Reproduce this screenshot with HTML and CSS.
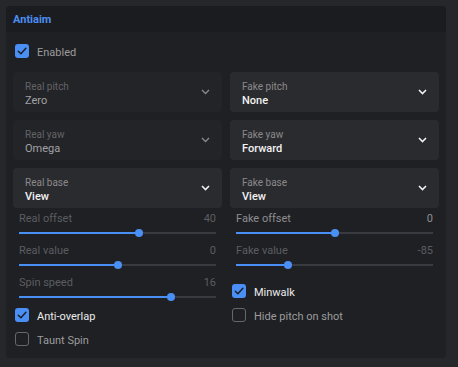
FILE: index.html
```html
<!DOCTYPE html>
<html lang="en">
<head>
  <meta charset="UTF-8" />
  <title>Antiaim</title>
  <link rel="stylesheet" href="styles.css">
</head>
<body>
  <div class="panel">
    <div class="panel-head">Antiaim</div>
    <div class="panel-body">
      <label class="check on dimtext">
        <span class="box"><svg width="14" height="14" viewBox="0 0 14 14"><path d="M3.3 7.2 L5.9 9.8 L10.9 4.2" /></svg></span>
        <span class="check-text">Enabled</span>
      </label>

      <div class="cols">
        <div class="col">
          <div class="select disabled">
            <div class="select-text">
              <span class="select-label">Real pitch</span>
              <span class="select-value">Zero</span>
            </div>
            <svg class="chev" width="9" height="6" viewBox="0 0 9 6"><path d="M1 1 L4.5 4.5 L8 1" /></svg>
          </div>
          <div class="select disabled">
            <div class="select-text">
              <span class="select-label">Real yaw</span>
              <span class="select-value">Omega</span>
            </div>
            <svg class="chev" width="9" height="6" viewBox="0 0 9 6"><path d="M1 1 L4.5 4.5 L8 1" /></svg>
          </div>
          <div class="select">
            <div class="select-text">
              <span class="select-label">Real base</span>
              <span class="select-value">View</span>
            </div>
            <svg class="chev" width="9" height="6" viewBox="0 0 9 6"><path d="M1 1 L4.5 4.5 L8 1" /></svg>
          </div>

          <div class="slider dim">
            <div class="slider-head"><span>Real offset</span><span>40</span></div>
            <div class="track"><div class="fill" style="width: 61%"><span class="knob"></span></div></div>
          </div>
          <div class="slider dim">
            <div class="slider-head"><span>Real value</span><span>0</span></div>
            <div class="track"><div class="fill" style="width: 50%"><span class="knob"></span></div></div>
          </div>
          <div class="slider dim">
            <div class="slider-head"><span>Spin speed</span><span>16</span></div>
            <div class="track"><div class="fill" style="width: 77%"><span class="knob"></span></div></div>
          </div>

          <label class="check on">
            <span class="box"><svg width="14" height="14" viewBox="0 0 14 14"><path d="M3.3 7.2 L5.9 9.8 L10.9 4.2" /></svg></span>
            <span class="check-text">Anti-overlap</span>
          </label>
          <label class="check dimtext">
            <span class="box"></span>
            <span class="check-text">Taunt Spin</span>
          </label>
        </div>

        <div class="col">
          <div class="select">
            <div class="select-text">
              <span class="select-label">Fake pitch</span>
              <span class="select-value">None</span>
            </div>
            <svg class="chev" width="9" height="6" viewBox="0 0 9 6"><path d="M1 1 L4.5 4.5 L8 1" /></svg>
          </div>
          <div class="select">
            <div class="select-text">
              <span class="select-label">Fake yaw</span>
              <span class="select-value">Forward</span>
            </div>
            <svg class="chev" width="9" height="6" viewBox="0 0 9 6"><path d="M1 1 L4.5 4.5 L8 1" /></svg>
          </div>
          <div class="select">
            <div class="select-text">
              <span class="select-label">Fake base</span>
              <span class="select-value">View</span>
            </div>
            <svg class="chev" width="9" height="6" viewBox="0 0 9 6"><path d="M1 1 L4.5 4.5 L8 1" /></svg>
          </div>

          <div class="slider">
            <div class="slider-head"><span>Fake offset</span><span>0</span></div>
            <div class="track"><div class="fill" style="width: 50%"><span class="knob"></span></div></div>
          </div>
          <div class="slider dim">
            <div class="slider-head"><span>Fake value</span><span>-85</span></div>
            <div class="track"><div class="fill" style="width: 26.5%"><span class="knob"></span></div></div>
          </div>

          <label class="check on first">
            <span class="box"><svg width="14" height="14" viewBox="0 0 14 14"><path d="M3.3 7.2 L5.9 9.8 L10.9 4.2" /></svg></span>
            <span class="check-text">Minwalk</span>
          </label>
          <label class="check dimtext">
            <span class="box"></span>
            <span class="check-text">Hide pitch on shot</span>
          </label>
        </div>
      </div>
    </div>
  </div>
</body>
</html>
```

FILE: styles.css
```css
body {
  margin: 0;
  padding: 6px;
  background-color: #26272b;
  font-family: Roboto, "Liberation Sans", sans-serif;
  font-size: 11px;
  color: #e8e8e8;
}

.panel {
  width: 440px;
  height: 352px;
  box-sizing: border-box;
  background-color: #1f2024;
  border-radius: 4px;
  overflow: hidden;
}

.panel-head {
  height: 26px;
  box-sizing: border-box;
  padding: 2px 0 0 7px;
  line-height: 24px;
  background-color: #1b1c1f;
  color: #4b8ef2;
  font-weight: bold;
  font-size: 11px;
}

.panel-body {
  padding: 8px 7px 6px;
}

.check {
  display: flex;
  align-items: center;
  height: 22px;
  padding: 0 0 2px 2px;
  color: #ececec;
}

.check-text {
  padding-top: 2px;
}

.check.dimtext {
  color: #9c9c9c;
}

.panel-body > .check {
  margin-bottom: 8px;
}

.check.first {
  margin-top: 8px;
}

.box {
  width: 14px;
  height: 14px;
  box-sizing: border-box;
  border: 1.5px solid #66676b;
  border-radius: 3px;
  margin-right: 8px;
  flex-shrink: 0;
}

.check.on .box {
  border: none;
  background-color: #4a8ff5;
}

.box svg {
  display: block;
}

.box path {
  fill: none;
  stroke: #1d1e22;
  stroke-width: 1.5;
  stroke-linecap: round;
  stroke-linejoin: round;
}

.cols {
  display: grid;
  grid-template-columns: 209px 209px;
  column-gap: 8px;
}

.col {
  display: flex;
  flex-direction: column;
}

.select {
  height: 40px;
  box-sizing: border-box;
  margin-bottom: 8px;
  padding: 9px 12px 0;
  display: flex;
  justify-content: space-between;
  background-color: #2a2b2f;
  border-radius: 4px;
}

.select:nth-child(3) {
  margin-bottom: 0;
}

.select-text {
  display: flex;
  flex-direction: column;
}

.select-label {
  font-size: 10px;
  line-height: 12px;
  color: #8a8a8c;
}

.select-value {
  font-size: 11px;
  line-height: 16px;
  font-weight: 500;
  color: #f2f2f2;
}

.chev {
  margin-top: 8px;
}

.chev path {
  fill: none;
  stroke: #f0f0f0;
  stroke-width: 1.6;
}

.select.disabled {
  background-color: #232428;
}

.select.disabled .select-label {
  color: #626366;
}

.select.disabled .select-value {
  font-weight: normal;
  color: #a2a2a4;
}

.select.disabled .chev path {
  stroke: #8a8a8c;
  stroke-width: 1.3;
}

.slider {
  height: 32px;
  box-sizing: border-box;
  padding: 4px 6px 0;
}

.slider-head {
  display: flex;
  justify-content: space-between;
  line-height: 14px;
  color: #8e8e90;
}

.slider.dim .slider-head {
  color: #5c5d61;
}

.track {
  height: 2px;
  margin-top: 6px;
  background-color: #393a3f;
}

.fill {
  position: relative;
  height: 2px;
  background-color: #4a8ff5;
}

.knob {
  position: absolute;
  right: -4px;
  top: -3px;
  width: 8px;
  height: 8px;
  border-radius: 50%;
  background-color: #4a8ff5;
}
```
